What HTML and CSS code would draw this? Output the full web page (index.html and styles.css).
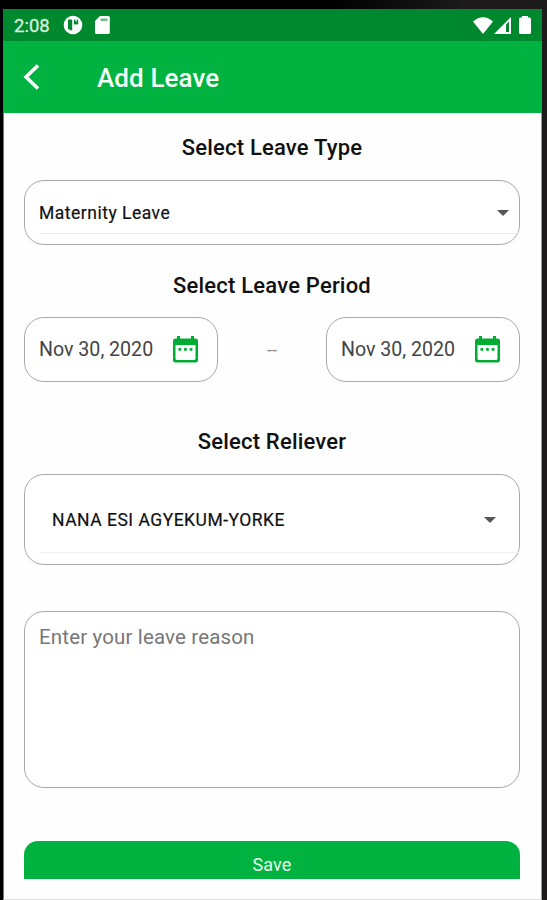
FILE: index.html
```html
<!DOCTYPE html>
<html lang="en">
<head>
    <meta charset="UTF-8">
    <meta name="viewport" content="width=device-width, initial-scale=1.0">
    <title>Add Leave</title>
    <link rel="stylesheet" href="styles.css">
</head>
<body>
    <div class="screen">
        <!-- Status bar -->
        <div class="status-bar">
            <span class="time">2:08</span>
            <svg class="icon-app" width="20" height="20" viewBox="0 0 20 20">
                <circle cx="10" cy="10" r="9.3" fill="#fff"/>
                <path d="M5 4.600h4.200v11.200L5 14z" fill="#00882e"/>
                <path d="M11 4.600h4.200v4.800H11z" fill="#00882e"/>
                <path d="M12.300 4.600h1.500v2h-1.500z" fill="#fff"/>
            </svg>
            <svg class="icon-sd" width="15" height="18" viewBox="0 0 15 18">
                <path d="M5 0h8.200q1.600 0 1.600 1.600v14.800q0 1.600-1.600 1.600H1.600Q0 18 0 16.400V5z" fill="#fff"/>
                <path d="M5.500 2.500h7v2.500h-7z" fill="#70b887"/>
            </svg>
            <div class="status-right">
                <svg class="icon-wifi" width="20" height="17" viewBox="0 0 21 17" preserveAspectRatio="none">
                    <path d="M0 4.500Q10.500-4 21 4.500L10.500 17z" fill="#fff"/>
                </svg>
                <svg class="icon-signal" width="17" height="17" viewBox="0 0 17 17">
                    <path d="M17 0v17H0z" fill="#fff"/>
                    <path d="M12 7.500l3-3V15h-3z" fill="#00882e"/>
                </svg>
                <svg class="icon-battery" width="12" height="18" viewBox="0 0 12 18">
                    <path d="M3 0h6v1.500h1.500Q12 1.500 12 3v13.500Q12 18 10.500 18h-9Q0 18 0 16.500V3Q0 1.500 1.500 1.500H3z" fill="#fff"/>
                </svg>
            </div>
        </div>

        <!-- Header -->
        <header class="app-bar">
            <svg class="back" width="17" height="26" viewBox="0 0 17 26">
                <path d="M15 1.500L3 13l12 11.500" fill="none" stroke="#fff" stroke-width="3.600"/>
            </svg>
            <h1>Add Leave</h1>
        </header>

        <!-- Leave form -->
        <form class="leave-form">
            <h2 class="type-title">Select Leave Type</h2>
            <div class="field select-type">
                <div class="select-line">
                    <span>Maternity Leave</span>
                    <i class="arrow"></i>
                </div>
            </div>

            <h2 class="period-title">Select Leave Period</h2>
            <div class="period">
                <div class="field date">
                    <span>Nov 30, 2020</span>
                    <svg width="25" height="27" viewBox="0 0 25 27">
                        <path d="M4 0h3v2.500h11V0h3v2.500h1.500q2.500 0 2.500 2.500v19q0 2.500-2.500 2.500h-20Q0 26.500 0 24V5q0-2.500 2.500-2.500H4zM2.500 9v13.500q0 1.500 1.500 1.500h17q1.500 0 1.500-1.500V9z" fill="#00ad32" fill-rule="evenodd"/>
                        <path d="M5.500 12h2.700v2.700H5.500zM11.100 12h2.700v2.700h-2.700zM16.700 12h2.700v2.700h-2.700z" fill="#00ad32"/>
                    </svg>
                </div>
                <span class="dash">--</span>
                <div class="field date">
                    <span>Nov 30, 2020</span>
                    <svg width="25" height="27" viewBox="0 0 25 27">
                        <path d="M4 0h3v2.500h11V0h3v2.500h1.500q2.500 0 2.500 2.500v19q0 2.500-2.500 2.500h-20Q0 26.500 0 24V5q0-2.500 2.500-2.500H4zM2.500 9v13.500q0 1.500 1.500 1.500h17q1.500 0 1.500-1.500V9z" fill="#00ad32" fill-rule="evenodd"/>
                        <path d="M5.500 12h2.700v2.700H5.500zM11.100 12h2.700v2.700h-2.700zM16.700 12h2.700v2.700h-2.700z" fill="#00ad32"/>
                    </svg>
                </div>
            </div>

            <h2 class="reliever-title">Select Reliever</h2>
            <div class="field select-reliever">
                <div class="select-line">
                    <span>NANA ESI AGYEKUM-YORKE</span>
                    <i class="arrow"></i>
                </div>
            </div>

            <textarea class="field reason" placeholder="Enter your leave reason"></textarea>
            <button type="button" class="btn-save">Save</button>
        </form>
    </div>
</body>
</html>
```
FILE: styles.css
```css
* {
    margin: 0;
    padding: 0;
    box-sizing: border-box;
}

body {
    width: 547px;
    height: 900px;
    padding: 9px 5px 0 3px;
    background: linear-gradient(to right, #000 60%, #1c1a1a 85%);
    font-family: Roboto, sans-serif;
    color: #111;
    overflow: hidden;
}

.screen {
    height: 891px;
    background: #fefefe;
    border-left: 1px solid #777;
    border-right: 1px solid #999;
    border-bottom: 1px solid #ddd;
}

/* Status bar */
.status-bar {
    height: 32px;
    margin: 0 -1px;
    padding: 0 11px 0 11px;
    background: #00882e;
    display: flex;
    align-items: center;
}

.time {
    width: 49px;
    padding-top: 1px;
    font-size: 18.5px;
    color: #d9f0df;
    -webkit-text-stroke: 0.3px #d9f0df;
}

.icon-sd {
    margin-left: 12px;
}

.status-right {
    margin-left: auto;
    display: flex;
    align-items: center;
}

.icon-signal {
    margin-left: 1px;
}

.icon-battery {
    margin-left: 8px;
}

/* Header */
.app-bar {
    height: 72px;
    margin: 0 -1px;
    padding-left: 20px;
    background: #00b341;
    display: flex;
    align-items: center;
}

.app-bar h1 {
    margin-left: 57px;
    padding-top: 1px;
    font-size: 26px;
    font-weight: 500;
    letter-spacing: 0.1px;
    color: #f4fff6;
}

/* Form */
.leave-form {
    padding: 0 21px 0 20px;
    display: flex;
    flex-direction: column;
}

h2 {
    font-size: 22px;
    line-height: 28px;
    font-weight: 500;
    letter-spacing: 0.2px;
    text-align: center;
}

.type-title {
    margin-top: 21px;
}

.period-title {
    margin-top: 27px;
}

.reliever-title {
    margin-top: 46px;
}

.field {
    border: 1.500px solid #a8a8a8;
    border-radius: 20px;
    background: #fff;
}

.select-type {
    height: 65px;
    margin-top: 18px;
    padding: 10px 0 0 14px;
}

.select-line {
    height: 43px;
    padding: 1px 10px 0 0;
    border-bottom: 1px solid #e8e8e8;
    display: flex;
    align-items: center;
    justify-content: space-between;
    font-size: 17.5px;
    letter-spacing: 0.5px;
    -webkit-text-stroke: 0.2px #111;
}

.arrow {
    border: 6.500px solid transparent;
    border-top-color: #555;
    border-bottom: 0;
}

.period {
    margin-top: 17px;
    display: flex;
    justify-content: space-between;
    align-items: center;
}

.date {
    width: 194px;
    height: 65px;
    padding: 0 19px 0 14px;
    display: flex;
    align-items: center;
    justify-content: space-between;
    font-size: 19.600px;
    color: #444;
}

.dash {
    font-size: 18px;
    color: #888;
}

.select-reliever {
    height: 91px;
    margin-top: 18px;
    padding: 12px 0 0 14px;
}

.select-reliever .select-line {
    height: 66px;
    padding: 0 23px 0 13px;
    border-bottom-color: #f0f0f0;
}

.reason {
    height: 177px;
    margin-top: 46px;
    padding: 12px 14px;
    font-family: inherit;
    font-size: 20.5px;
    line-height: 26px;
    letter-spacing: 0.150px;
    resize: none;
}

.reason::placeholder {
    color: #777;
}

.btn-save {
    height: 38px;
    margin-top: 53px;
    padding-top: 9px;
    border: none;
    border-radius: 14px 14px 0 0;
    background: #00b341;
    font-family: inherit;
    font-size: 18px;
    letter-spacing: 0.1px;
    color: #e9fbee;
}
```
